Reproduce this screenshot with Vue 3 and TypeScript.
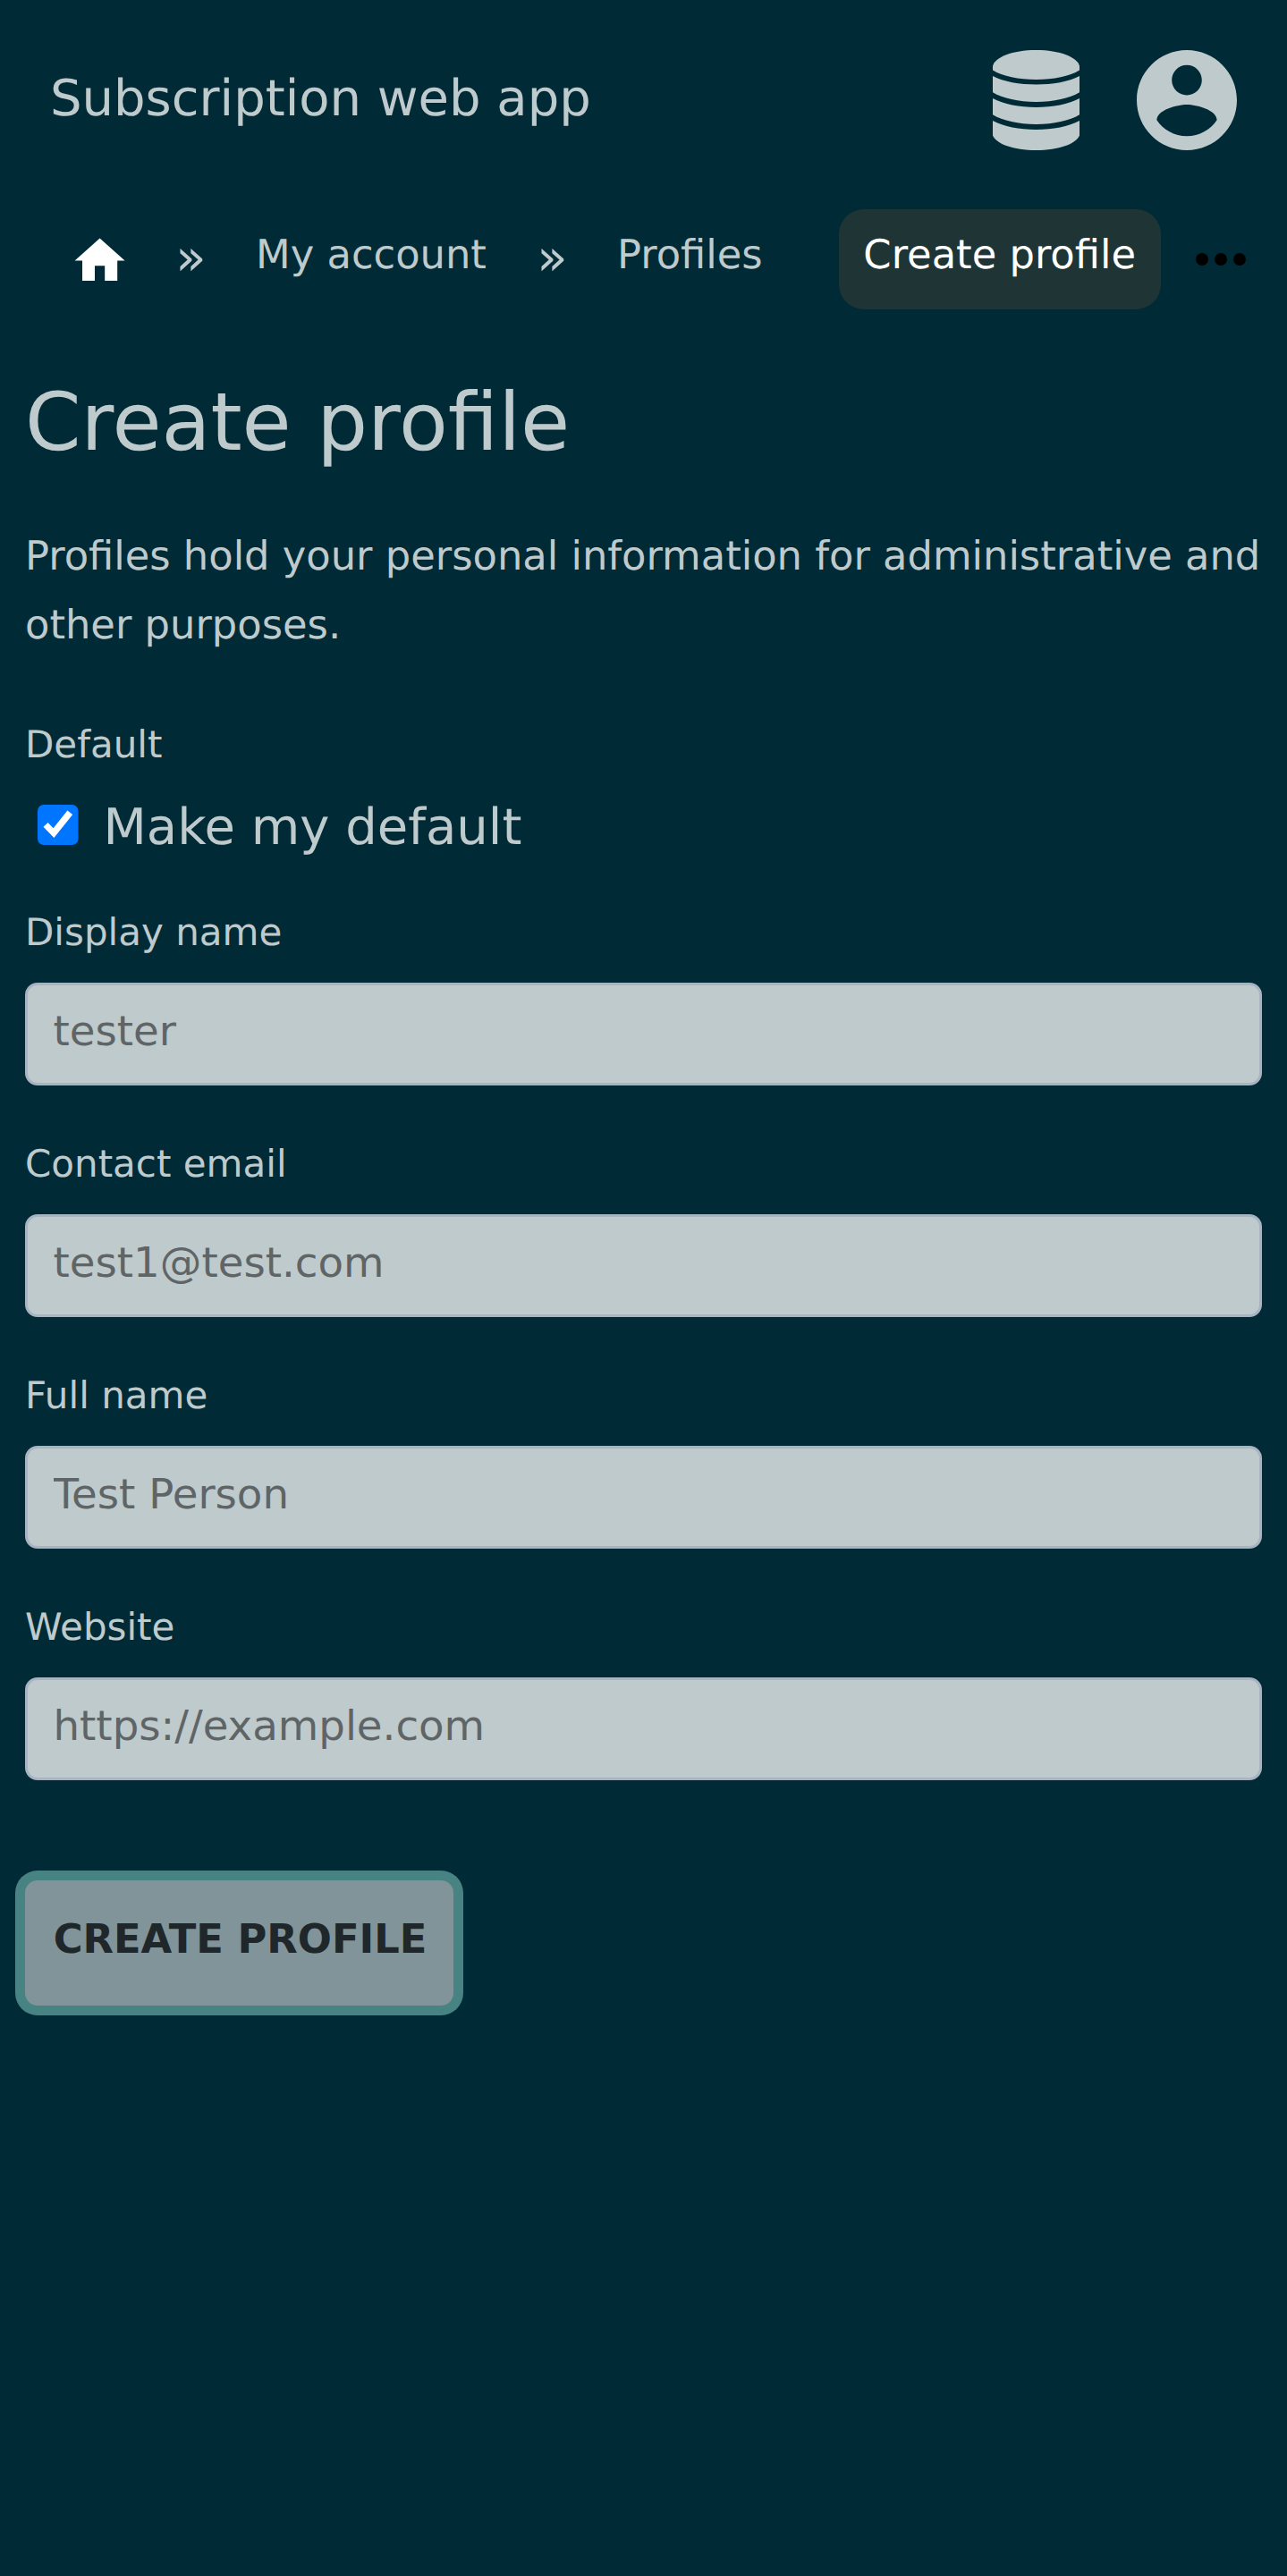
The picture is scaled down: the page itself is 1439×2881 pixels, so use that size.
<script setup lang="ts">
import { ref } from 'vue'

interface Field {
  id: string
  label: string
  placeholder: string
  type: string
}

const fields: Field[] = [
  { id: 'display-name', label: 'Display name', placeholder: 'tester', type: 'text' },
  { id: 'contact-email', label: 'Contact email', placeholder: 'test1@test.com', type: 'email' },
  { id: 'full-name', label: 'Full name', placeholder: 'Test Person', type: 'text' },
  { id: 'website', label: 'Website', placeholder: 'https://example.com', type: 'url' },
]

const makeDefault = ref(true)
</script>

<template>
  <div class="page">
    <header class="topbar">
      <span class="brand">Subscription web app</span>
      <div class="actions">
        <svg class="db" viewBox="0 0 97 112" aria-hidden="true">
          <path d="M0 18C2 8 22 0 48.500 0S95 8 97 18V22.600C86 29.500 68 33 48.500 33S11 29.500 0 22.600Z" />
          <path d="M0 29C12 35.500 30 38.500 48.500 38.500S85 35.500 97 29V47.300C86 54 68 58 48.500 58S11 54 0 47.300Z" />
          <path d="M0 54C12 60.500 30 64 48.500 64S85 60.500 97 54V72.300C86 79 68 83 48.500 83S11 79 0 72.300Z" />
          <path d="M0 79C12 85.500 30 89 48.500 89S85 85.500 97 79V95.500C93 105 74 112 48.500 112S4 105 0 95.500Z" />
        </svg>
        <svg class="account" viewBox="2 2 20 20" aria-hidden="true">
          <path d="M12 2C6.480 2 2 6.480 2 12s4.480 10 10 10 10-4.480 10-10S17.520 2 12 2zm0 3c1.660 0 3 1.340 3 3s-1.340 3-3 3-3-1.340-3-3 1.340-3 3-3zm0 14.200c-2.500 0-4.710-1.280-6-3.220.030-1.990 4-3.080 6-3.080 1.990 0 5.970 1.090 6 3.080-1.290 1.940-3.500 3.220-6 3.220z" />
        </svg>
      </div>
    </header>

    <nav class="crumbs">
      <svg class="home" viewBox="0 0 24 24" aria-hidden="true">
        <path d="M10 20v-6h4v6h5v-8h3L12 3 2 12h3v8z" />
      </svg>
      <span class="sep">»</span>
      <a class="crumb">My account</a>
      <span class="sep">»</span>
      <a class="crumb">Profiles</a>
      <a class="crumb current">Create profile</a>
      <svg class="more" viewBox="0 0 24 24" aria-hidden="true">
        <circle cx="6" cy="12" r="2" />
        <circle cx="12" cy="12" r="2" />
        <circle cx="18" cy="12" r="2" />
      </svg>
    </nav>

    <main>
      <h1>Create profile</h1>
      <p class="intro">Profiles hold your personal information for administrative and other purposes.</p>

      <form @submit.prevent>
        <div class="default-group">
          <div class="label">Default</div>
          <label class="check">
            <input v-model="makeDefault" class="native" type="checkbox" />
            <svg class="box" viewBox="0 0 45.500 45" aria-hidden="true">
              <rect width="45.500" height="45" rx="7" />
              <path v-if="makeDefault" d="M6.500 24.700L11.600 19.900L17.600 26.200L33.400 6.400L39.200 11L18.400 37Z" />
            </svg>
            <span>Make my default</span>
          </label>
        </div>
        <div v-for="f in fields" :key="f.id" class="field">
          <label class="label" :for="f.id">{{ f.label }}</label>
          <input :id="f.id" class="control" :type="f.type" :placeholder="f.placeholder" />
        </div>
        <button class="submit" type="button">CREATE PROFILE</button>
      </form>
    </main>
  </div>
</template>

<style>
html,
body {
  margin: 0;
  background: #002b36;
}
</style>

<style scoped>
.page {
  box-sizing: border-box;
  width: 1439px;
  height: 2881px;
  overflow: hidden;
  background: #002b36;
  color: #bfcacc;
  font-family: "DejaVu Sans", sans-serif;
  text-rendering: geometricPrecision;
}

.topbar {
  display: flex;
  justify-content: space-between;
  height: 112px;
  padding: 56px 56px 0;
}

.brand {
  font-size: 56px;
  line-height: 110px;
}

.actions {
  display: flex;
  gap: 64px;
}

.db {
  width: 97px;
  height: 112px;
  fill: currentColor;
}

.account {
  width: 112px;
  height: 112px;
  fill: currentColor;
}

.crumbs {
  display: flex;
  height: 112px;
  margin-top: 66.300px;
  padding-left: 78.400px;
}

.home {
  width: 67.200px;
  height: 67.200px;
  margin-top: 24px;
  fill: #fff;
}

.sep {
  width: 34.300px;
  margin-left: 50.700px;
  font-size: 56px;
  line-height: 110px;
}

.crumb {
  box-sizing: border-box;
  height: 112px;
  margin-left: 27.500px;
  padding: 0 28px;
  border-radius: 28px;
  font-size: 44.800px;
  line-height: 102px;
  white-space: nowrap;
}

.crumb + .sep {
  margin-left: 28.300px;
}

.crumb.current {
  margin-left: 57.200px;
  padding: 0 28.500px 0 27.500px;
  background: #1f3434;
  color: #fff;
}

.more {
  width: 84px;
  height: 84px;
  margin-top: 14px;
  margin-left: 24.500px;
  fill: #000;
}

main {
  padding: 0 28px;
}

h1 {
  margin: 71.200px 0 0;
  font-size: 89.600px;
  font-weight: 400;
  line-height: 112px;
}

.intro {
  margin: 53.500px 0 0;
  font-size: 44.800px;
  line-height: 77px;
}

.label {
  display: block;
  font-size: 42px;
  line-height: 56px;
}

.default-group {
  height: 210px;
  margin-top: 68px;
}

.check {
  display: flex;
  margin-top: 27px;
  font-size: 56px;
  line-height: 76px;
}

.native {
  width: 0;
  height: 0;
  margin: 0;
  opacity: 0;
}

.box {
  width: 45.500px;
  height: 45px;
  margin: 12px 28px 0 14px;
  fill: #0075ff;
}

.box path {
  fill: #fff;
}

.field {
  height: 259px;
}

.control {
  display: block;
  box-sizing: border-box;
  width: 100%;
  height: 115.500px;
  margin: 28px 0 0;
  padding: 0 28.500px 8px;
  border: 3.500px solid #a9b4c2;
  border-radius: 14px;
  outline: 0;
  background: #bfcacc;
  color: #20272a;
  font: 46.667px "DejaVu Sans", sans-serif;
}

.control::placeholder {
  color: #5f6566;
  opacity: 1;
}

.submit {
  display: block;
  box-sizing: border-box;
  width: 479px;
  height: 140px;
  margin-top: 52.500px;
  padding: 0 0 10px 2px;
  border: 0;
  border-radius: 14px;
  background: #80949a;
  box-shadow: 0 0 0 11px #488383;
  color: #20272a;
  font: bold 44.800px "DejaVu Sans", sans-serif;
  white-space: nowrap;
}
</style>
